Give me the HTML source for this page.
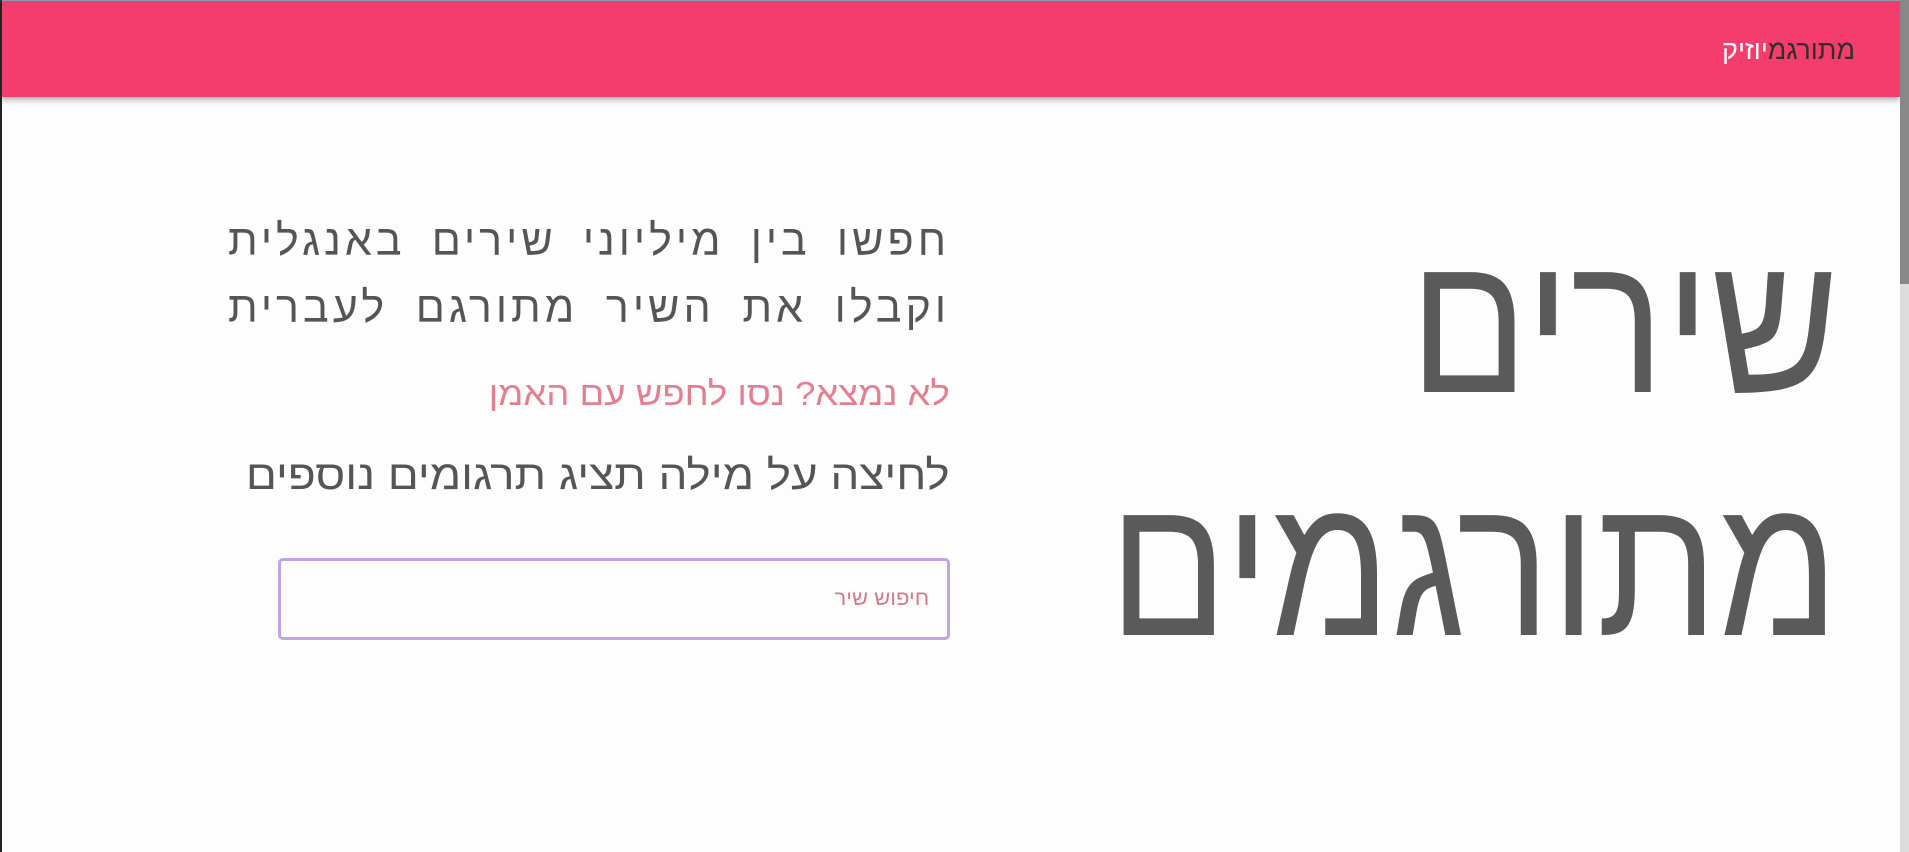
<!DOCTYPE html>
<html><head><meta charset="utf-8"><style>
html,body{margin:0;padding:0;width:1909px;height:852px;overflow:hidden;background:#fdfdfd;font-family:"Liberation Sans","Noto Sans CJK SC",sans-serif;}
.lb{position:absolute;left:0;top:0;width:2px;height:852px;background:#222;}
.topb{position:absolute;left:0;top:0;width:1909px;height:1px;background:#8fa0b8;}
header{position:absolute;left:0;top:1px;width:1900px;height:96px;background:#f43d6c;box-shadow:0 3px 6px rgba(0,0,0,.3);}
.brand{position:absolute;right:45px;top:33px;font-size:27px;line-height:32px;direction:rtl;}
.brand .a{color:#2f2f2f}.brand .b{color:#fff}
.sb{position:absolute;right:0;top:0;width:9px;height:852px;background:#ddd;}
.sb i{display:block;width:9px;height:284px;background:#888;}
.big{position:absolute;right:70px;width:800px;text-align:right;direction:rtl;color:#5a5a5a;font-size:200px;line-height:200px;transform:scaleX(0.88);transform-origin:right top;white-space:nowrap;}
.pl{position:absolute;left:228px;width:722px;direction:rtl;color:#555;font-size:43px;line-height:67px;text-align:justify;text-align-last:justify;white-space:nowrap;letter-spacing:4px;}
.pink{position:absolute;right:959px;top:372px;direction:rtl;color:#e57f90;font-size:33px;line-height:44px;white-space:nowrap;transform:scaleX(1.106);transform-origin:right center;}
.p3{position:absolute;right:959px;top:450px;direction:rtl;color:#555;font-size:41px;line-height:50px;white-space:nowrap;transform:scaleX(1.116);transform-origin:right center;}
.inp{position:absolute;left:278px;top:558px;width:666px;height:76px;border:3px solid #c0a4e4;border-radius:5px;}
.inp span{position:absolute;right:18px;top:26px;color:#d7798a;font-size:21px;direction:rtl;transform:scaleX(1.05);transform-origin:right center;}
</style></head><body>
<div class="topb"></div>
<header><div class="brand"><span class="a">מתורגמ</span><span class="b">יוזיק</span></div></header>
<div class="lb"></div>
<div class="sb"><i></i></div>
<div class="big" style="top:224px">שירים</div>
<div class="big" style="top:467px">מתורגמים</div>
<div class="pl" style="top:208px">חפשו בין מיליוני שירים באנגלית</div>
<div class="pl" style="top:275px">וקבלו את השיר מתורגם לעברית</div>
<div class="pink">לא נמצא? נסו לחפש עם האמן</div>
<div class="p3">לחיצה על מילה תציג תרגומים נוספים</div>
<div class="inp"><span>חיפוש שיר</span></div>
</body></html>
